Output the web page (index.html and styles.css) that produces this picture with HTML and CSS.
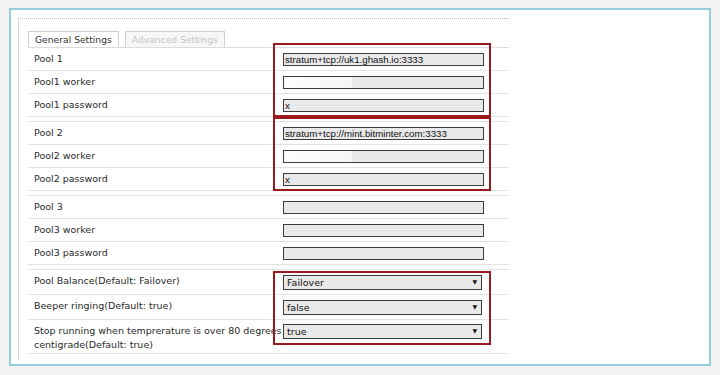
FILE: index.html
```html
<!DOCTYPE html>
<html lang="en">
<head>
    <meta charset="UTF-8">
    <meta name="viewport" content="width=device-width, initial-scale=1.0">
    <title>Miner Configuration</title>
    <link rel="stylesheet" href="styles.css">
</head>
<body>

    <div class="frame">
        <div class="panel">
            <div class="tabs">
                <span class="tab active">General Settings</span>
                <span class="tab">Advanced Settings</span>
            </div>

            <div class="group first">
                <div class="row"><label>Pool 1</label><input class="field" value="stratum+tcp://uk1.ghash.io:3333"></div>
                <div class="row"><label>Pool1 worker</label><input class="field hidden-value" value=""></div>
                <div class="row"><label>Pool1 password</label><input class="field" value="x"></div>
                <div class="mark"></div>
            </div>

            <div class="group">
                <div class="row"><label>Pool 2</label><input class="field" value="stratum+tcp://mint.bitminter.com:3333"></div>
                <div class="row"><label>Pool2 worker</label><input class="field hidden-value" value=""></div>
                <div class="row"><label>Pool2 password</label><input class="field" value="x"></div>
                <div class="mark"></div>
            </div>

            <div class="group">
                <div class="row"><label>Pool 3</label><input class="field" value=""></div>
                <div class="row"><label>Pool3 worker</label><input class="field" value=""></div>
                <div class="row"><label>Pool3 password</label><input class="field" value=""></div>
            </div>

            <div class="group selects">
                <div class="row">
                    <label>Pool Balance(Default: Failover)</label>
                    <span class="choice"><select><option>Failover</option><option>Load Balance</option></select></span>
                </div>
                <div class="row">
                    <label>Beeper ringing(Default: true)</label>
                    <span class="choice"><select><option>false</option><option>true</option></select></span>
                </div>
                <div class="row tall">
                    <label class="wrap">Stop running when temprerature is over 80 degrees<br>centigrade(Default: true)</label>
                    <span class="choice"><select><option>true</option><option>false</option></select></span>
                </div>
                <div class="mark low"></div>
            </div>
        </div>
    </div>

</body>
</html>
```

FILE: styles.css
```css
body {
    margin: 0;
    background: #f3f3f3;
    font-family: "DejaVu Sans", Verdana, sans-serif;
    font-size: 9.5px;
    color: #2a2a2a;
}

.frame {
    box-sizing: border-box;
    margin: 8px 0 0 9px;
    width: 702px;
    height: 358px;
    padding: 8px 0 0 7px;
    border: 2px solid #93d0dc;
    background: #fff;
}

.panel {
    box-sizing: border-box;
    width: 491px;
    height: 342px;
    padding: 12px 0 0 9px;
    border-top: 1px dotted #b8b8b8;
    border-left: 1px solid #d4d4d4;
}

.tabs {
    display: flex;
    gap: 6px;
    height: 16px;
    border-bottom: 1px solid #dcdcdc;
}

.tab {
    padding: 0 6px;
    font-size: 9.2px;
    line-height: 15px;
    border: 1px solid #d0d0d0;
    border-bottom: none;
    color: #c4c4c4;
    background: #f7f7f7;
}

.tab.active {
    color: #333;
    background: #fff;
}

.group {
    position: relative;
    margin-top: 4px;
    border-top: 1px solid #e2e2e2;
}

.group.first {
    margin-top: 0;
    border-top: none;
}

.row {
    display: flex;
    align-items: flex-start;
    padding: 5px 0 4px;
    border-bottom: 1px solid #e2e2e2;
}

.row label {
    flex: none;
    width: 249px;
    padding-left: 6px;
    line-height: 12px;
}

.row label.wrap {
    white-space: nowrap;
    line-height: 14px;
}

.row.tall {
    padding: 4px 0 1px;
}

.field {
    box-sizing: border-box;
    width: 201px;
    height: 13px;
    margin: 0;
    padding: 0 1px;
    border: 1px solid #3c3c3c;
    background: #e9e9e9;
    font-family: "Liberation Sans", Arial, sans-serif;
    font-size: 9.7px;
    color: #111;
    outline: none;
}

.field.hidden-value {
    background: linear-gradient(to right, #fdfdfd 0, #f6f6f6 68px, #e9e9e9 68px);
}

.choice {
    position: relative;
    width: 199px;
    height: 15px;
}

.choice select {
    appearance: none;
    -webkit-appearance: none;
    box-sizing: border-box;
    width: 199px;
    height: 15px;
    margin: 0;
    padding: 0 3px;
    border: 1px solid #3c3c3c;
    border-radius: 0;
    background: #e9e9e9;
    font-family: "DejaVu Sans", Verdana, sans-serif;
    font-size: 9.5px;
    color: #111;
}

.choice::after {
    content: "\25BC";
    position: absolute;
    right: 5px;
    top: 3px;
    font-size: 6px;
    color: #111;
    pointer-events: none;
}

.mark {
    position: absolute;
    left: 245px;
    top: -5px;
    box-sizing: border-box;
    width: 218px;
    height: 74px;
    border: 2px solid #9b1a1e;
}

.mark.low {
    top: 1px;
}
```
